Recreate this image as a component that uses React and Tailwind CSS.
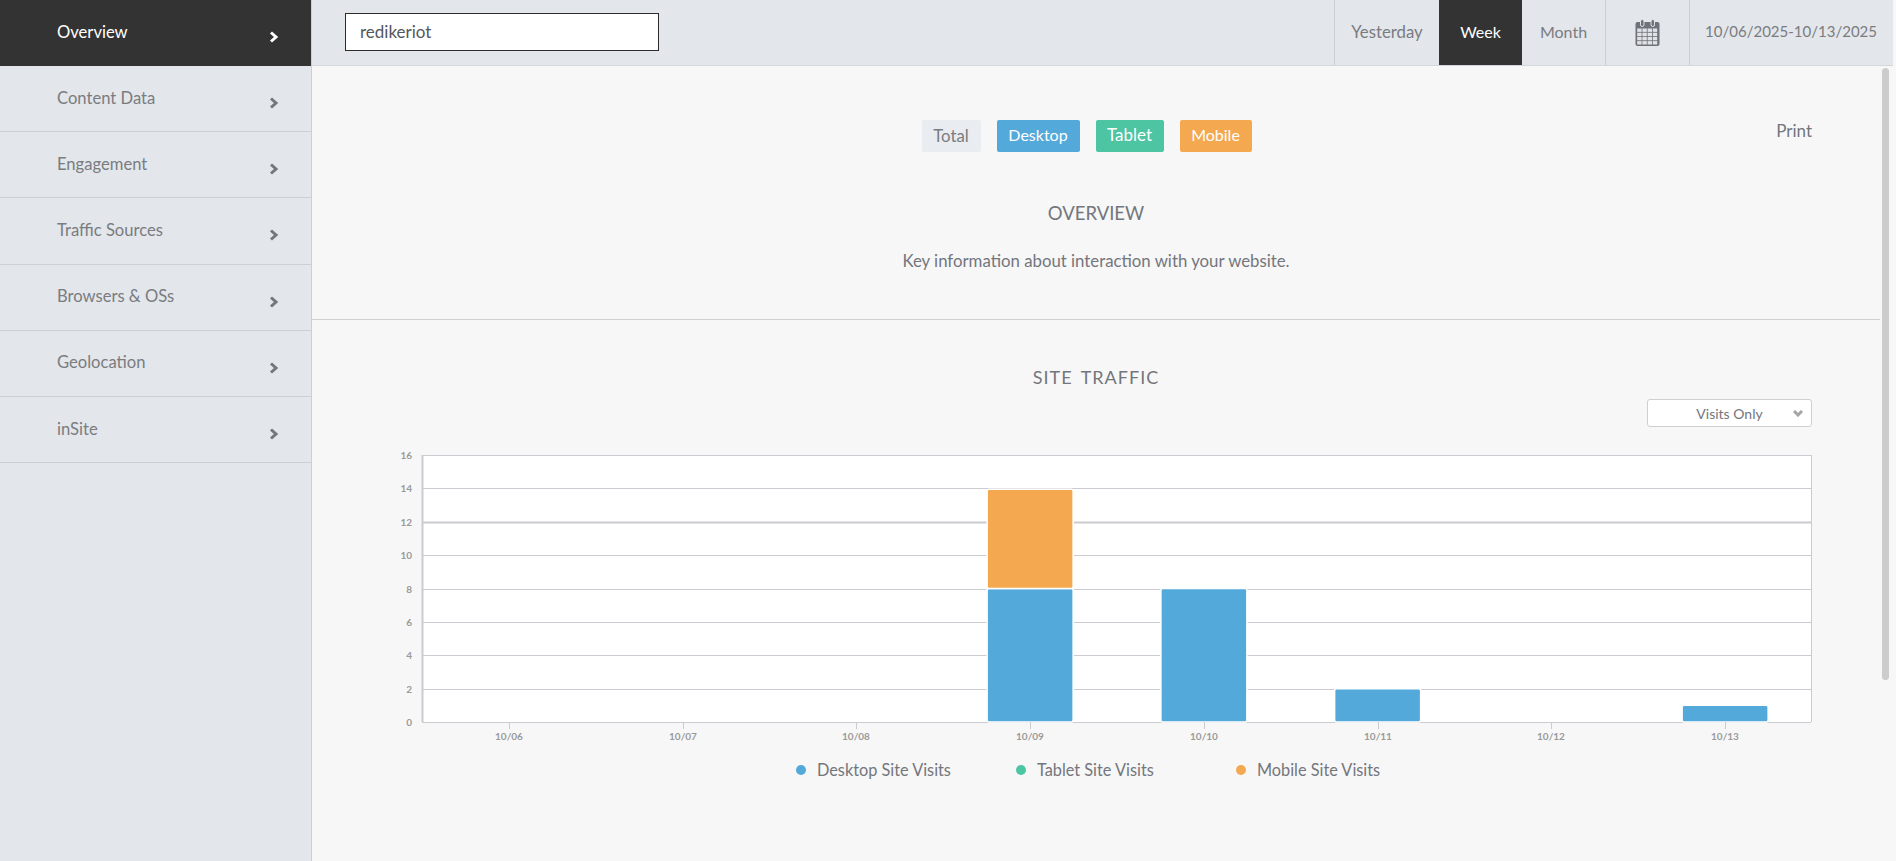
const font = "font-['Lato','Noto_Sans',sans-serif]";

const menu = ["Overview", "Content Data", "Engagement", "Traffic Sources", "Browsers & OSs", "Geolocation", "inSite"];
const days = ["10/06", "10/07", "10/08", "10/09", "10/10", "10/11", "10/12", "10/13"];

// chart numbers are in svg coords, the svg sits at x=380 in the page
const axisX = 42;
const plotRight = 1431;
const plotTop = 10;
const step = 33.38;
const slot = 173.75;
const zeroY = plotTop + step * 8;
const bars = [
	{ day: 3, from: 0, to: 8, color: "#54a9db" },
	{ day: 3, from: 8, to: 13.95, color: "#f4a951" },
	{ day: 4, from: 0, to: 8, color: "#54a9db" },
	{ day: 5, from: 0, to: 2, color: "#54a9db" },
	{ day: 7, from: 0, to: 1, color: "#54a9db" },
];

function Chevron({ active }) {
	return (
		<svg width="10" height="12" viewBox="0 0 10 12" className="mt-[9px]">
			<path d="M2 1.5 L7 6 L2 10.5" fill="none" stroke={active ? "#ffffff" : "#72767d"} strokeWidth="3" />
		</svg>
	);
}

function Calendar() {
	return (
		<svg width="25" height="27" viewBox="0 0 25 27">
			<rect x="0.5" y="3" width="24" height="24" rx="2" fill="#6f7278" />
			<rect x="5.5" y="0.5" width="3.5" height="7" rx="1.7" fill="#6f7278" stroke="#e3e6eb" strokeWidth="1" />
			<rect x="16" y="0.5" width="3.5" height="7" rx="1.7" fill="#6f7278" stroke="#e3e6eb" strokeWidth="1" />
			{[0, 1, 2, 3].map((r) =>
				[0, 1, 2, 3].map((c) => (
					<rect key={r + "-" + c} x={2.2 + c * 5.2} y={9.5 + r * 4.2} width="4.4" height="3.4" fill="#dfe2e7" />
				))
			)}
		</svg>
	);
}

function Sidebar() {
	return (
		<aside className="w-[312px] shrink-0 border-r border-[#ccd0d6] bg-[#e3e6eb]">
			{menu.map((item, i) => (
				<div
					key={item}
					className={
						i === 0
							? "flex h-[66px] items-center justify-between bg-[#333333] pb-[1px] pl-[57px] pr-[32px] text-white"
							: "flex h-[66.2px] items-center justify-between border-b border-[#ccd0d6] pl-[57px] pr-[32px] text-[#7a7c80]"
					}
				>
					<span className="-mt-[1px] text-[16.6px]">{item}</span>
					<Chevron active={i === 0} />
				</div>
			))}
		</aside>
	);
}

function Header() {
	return (
		<header className="mr-[3px] flex h-[66px] shrink-0 items-stretch justify-between border-b border-[#d4d7dc] bg-[#e3e6eb] text-[16px] text-[#7a7c80]">
			<div className="flex items-center pb-[2px] pl-[33px]">
				<div className="flex h-[38px] w-[314px] items-center border border-[#2c2c2c] bg-white pl-[14px] text-[17px] text-[#55575b]">redikeriot</div>
			</div>
			<div className="flex">
				<div className="flex w-[105px] items-center justify-center border-l border-[#ccd0d6] pb-[2px] text-[16.8px]">Yesterday</div>
				<div className="flex w-[83px] items-center justify-center bg-[#333333] pb-[1px] text-white">Week</div>
				<div className="flex w-[83px] items-center justify-center pb-[2px]">Month</div>
				<div className="flex w-[84px] items-center justify-center border-l border-[#ccd0d6] pb-[1px]">
					<Calendar />
				</div>
				<div className="flex w-[204px] items-center justify-end border-l border-[#ccd0d6] pb-[2px] pr-[16px] text-[15px]">10/06/2025-10/13/2025</div>
			</div>
		</header>
	);
}

function Chart() {
	return (
		<svg width="1432" height="300" viewBox="0 0 1432 300" className="block">
			<rect x={axisX} y={plotTop} width={plotRight - axisX} height={step * 8} fill="#ffffff" />
			{[0, 1, 2, 3, 4, 5, 6, 7, 8].map((n) => {
				const y = Math.round(zeroY - n * step) + 0.5;
				return (
					<g key={n}>
						<line x1={axisX} x2={plotRight} y1={y} y2={y} stroke="#cbccd2" strokeWidth={n === 6 ? 2 : 1} />
						<text x={axisX - 10} y={y + 3.5} textAnchor="end" fontSize="10" fill="#9a9a9a" fontFamily="Lato, sans-serif" fontWeight="700">
							{n * 2}
						</text>
					</g>
				);
			})}
			<line x1={axisX + 0.5} x2={axisX + 0.5} y1={plotTop} y2={zeroY} stroke="#cbccd2" strokeWidth="2" />
			<line x1={plotRight + 0.5} x2={plotRight + 0.5} y1={plotTop} y2={zeroY} stroke="#cbccd2" />
			{bars.map((b) => {
				const cx = axisX + slot * (b.day + 0.5);
				const top = zeroY - (b.to * step) / 2;
				const h = ((b.to - b.from) * step) / 2;
				return <rect key={b.day + "-" + b.from} x={cx - 43} y={top} width="86" height={h} rx="2" fill={b.color} stroke="#ffffff" strokeWidth="1.5" />;
			})}
			{days.map((d, i) => {
				const cx = Math.round(axisX + slot * (i + 0.5));
				return (
					<g key={d}>
						<line x1={cx + 0.5} x2={cx + 0.5} y1={zeroY} y2={zeroY + 7} stroke="#cbccd2" />
						<text x={cx} y={zeroY + 18} textAnchor="middle" fontSize="10" fill="#9a9a9a" fontFamily="Lato, sans-serif" fontWeight="700">
							{d}
						</text>
					</g>
				);
			})}
		</svg>
	);
}

function Legend({ color, label }) {
	return (
		<div className="flex w-[220px] items-center gap-[11px]">
			<span className={color + " h-[10px] w-[10px] rounded-full"}></span>
			<span>{label}</span>
		</div>
	);
}

export default function App() {
	return (
		<div className={font + " flex h-[861px] w-[1896px] overflow-hidden bg-[#f7f7f7]"}>
			<Sidebar />
			<div className="flex min-w-0 flex-1 flex-col">
				<Header />
				<main className="relative w-[1568px] flex-1 text-[#73767c]">
					<div className="border-b border-[#cfcfcf] pb-[45px] pt-[54px] text-center">
						<div className="flex justify-center gap-[16px] pr-[19px] text-[16px] text-white">
							<button className="h-[32px] w-[59px] rounded-[2px] bg-[#e9ecf1] pb-[1px] text-[16.8px] text-[#7a7c80]">Total</button>
							<button className="h-[32px] w-[83px] rounded-[2px] bg-[#54a9db] pb-[2px]">Desktop</button>
							<button className="h-[32px] w-[68px] rounded-[2px] bg-[#4dc4a2] pb-[2px] text-[17px]">Tablet</button>
							<button className="h-[32px] w-[72px] rounded-[2px] bg-[#f4a951] pb-[2px]">Mobile</button>
						</div>
						<h2 className="mt-[48px] text-[18.5px] leading-[26px]">OVERVIEW</h2>
						<p className="mt-[22px] text-[16.8px] leading-[26px]">Key information about interaction with your website.</p>
					</div>
					<div className="absolute right-[68px] top-[52px] text-[17px]">Print</div>
					<section className="px-[68px] pt-[44px]">
						<h2 className="text-center text-[18px] leading-[26px] tracking-[1px] [word-spacing:3px]">SITE TRAFFIC</h2>
						<div className="mt-[9px] flex justify-end">
							<div className="relative flex h-[28px] w-[165px] items-center justify-center rounded-[3px] border border-[#cfcfcf] bg-white text-[14px]">
								Visits Only
								<svg width="10" height="7" viewBox="0 0 10 7" className="absolute right-[8px] top-[10px]">
									<path d="M1 1 L5 5 L9 1" fill="none" stroke="#a5a5a5" strokeWidth="3" />
								</svg>
							</div>
						</div>
						<div className="mt-[18px]">
							<Chart />
						</div>
						<div className="mt-[14px] flex pl-[416px] text-[16.3px] leading-[22px]">
							<Legend color="bg-[#54a9db]" label="Desktop Site Visits" />
							<Legend color="bg-[#4dc4a2]" label="Tablet Site Visits" />
							<Legend color="bg-[#f4a951]" label="Mobile Site Visits" />
						</div>
					</section>
				</main>
			</div>
			<div className="pointer-events-none absolute left-[1882px] top-[68px] h-[612px] w-[7px] rounded-full bg-[#cccccc]"></div>
		</div>
	);
}
